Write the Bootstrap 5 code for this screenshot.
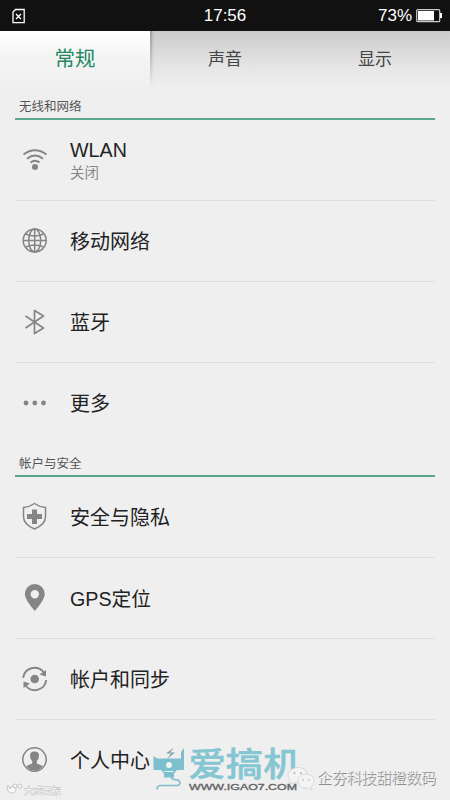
<!DOCTYPE html>
<html lang="zh-CN">
<head>
<meta charset="utf-8">
<meta name="viewport" content="width=device-width, initial-scale=1">
<title>设置</title>
<link href="https://cdn.jsdelivr.net/npm/bootstrap@5.3.0/dist/css/bootstrap.min.css" rel="stylesheet">
<style>
body{font-family:"Liberation Sans","Noto Sans CJK SC",sans-serif;background:#efefef;color:#222}
.screen{width:450px;height:800px;background:#efeff0}
.status{height:31px;background:#111;color:#fff;font-size:17px;line-height:31px}
.status svg,.entry svg{display:block;flex:none}
.status .battery{margin-right:7px}
.tabs{height:58px;background:linear-gradient(#cbcbcb,#d8d8d8 30%,#e8e8e8 70%,#efeff0)}
.tab{flex:1;font-size:17px;line-height:57px;color:#444}
.tab.current{font-size:20.5px;line-height:56px;color:#22885f;background:linear-gradient(#fff,#f5f5f5 40%,#efeff0)}
.tab.after{background:linear-gradient(#8889,#8880) 0 0/2px 100% no-repeat,linear-gradient(#8883,#8880) 2px 0/2px 100% no-repeat}
.group-title{height:31px;margin:0 15px;padding:8px 4px 0;border-bottom:2px solid #57a78a;font-size:12.5px;line-height:20px;color:#555}
#account{height:33px;padding-top:10px}
.entry{height:81px;margin:0 15px;padding-left:5px;border-bottom:1px solid #dfdfdf;font-size:20px;line-height:26px;color:#222}
.entry.last-in{border-color:transparent}
.entry .glyph{width:30px;margin-right:20px}
.entry .label{padding-top:2px}
.entry .latin{font-size:19.700px}
.entry .sub{font-size:14.5px;line-height:20px;color:#888}
.g{color:#858585}
.mark-layer{left:0;top:740px;width:450px;height:60px;pointer-events:none}
</style>
<script src="https://cdn.jsdelivr.net/npm/bootstrap@5.3.0/dist/js/bootstrap.bundle.min.js"></script>
</head>
<body>
<main class="screen position-relative overflow-hidden">
<header class="status d-flex align-items-center position-relative">
<svg class="ms-2" width="20" height="20" viewBox="0 0 20 20" fill="none" stroke="#fff" stroke-width="1.300"><path d="M7.500 3.500h8.700v13.200H5V6zM8 8l5 5M13 8l-5 5"/></svg>
<span class="position-absolute start-50 translate-middle-x">17:56</span>
<span class="ms-auto">73%</span>
<svg class="battery ms-1" width="27" height="15" viewBox="0 0 27 15"><rect x=".7" y="1.700" width="23" height="12" rx="1" fill="none" stroke="#ccc" stroke-width="1.200"/><path fill="#fff" d="M2 3h16v9.500H2zM24 5h2v5h-2z"/></svg>
</header>
<nav class="tabs d-flex text-center">
<div class="tab current">常规</div><div class="tab after">声音</div><div class="tab">显示</div>
</nav>
<h2 class="group-title fw-normal mb-0">无线和网络</h2>
<div class="entry d-flex align-items-center">
<span class="glyph g"><svg width="30" height="30" viewBox="0 0 30 30" fill="none" stroke="currentColor" stroke-width="1.900"><path d="M3.500 9.500q11.500-8.500 23 0M7 13.700q8-6.500 16 0M10.500 17.500q4.500-3.500 9 0"/><circle cx="15" cy="22" r="3" fill="currentColor" stroke="none"/></svg></span>
<div><div class="latin">WLAN</div><div class="sub">关闭</div></div>
</div>
<div class="entry d-flex align-items-center">
<span class="glyph g"><svg width="30" height="30" viewBox="0 0 30 30" fill="none" stroke="currentColor" stroke-width="1.500"><circle cx="14.700" cy="14.500" r="11.500"/><ellipse cx="14.700" cy="14.500" rx="6" ry="11.500"/><path d="M14.700 3v23M3.200 14.500h23M5.700 8q9 4 18 0M5.700 21q9-4 18 0"/></svg></span>
<div class="label">移动网络</div>
</div>
<div class="entry d-flex align-items-center">
<span class="glyph g"><svg width="30" height="30" viewBox="0 0 30 30" fill="none" stroke="currentColor" stroke-width="1.700" stroke-linejoin="round"><path d="M5.500 9l18 12-9 5.500v-23L23.500 9l-18 12"/></svg></span>
<div class="label">蓝牙</div>
</div>
<div class="entry last-in d-flex align-items-center">
<span class="glyph g"><svg width="30" height="30" viewBox="0 0 30 30" fill="currentColor"><circle cx="6" cy="15" r="2.400"/><circle cx="14.800" cy="15" r="2.400"/><circle cx="23.500" cy="15" r="2.400"/></svg></span>
<div class="label">更多</div>
</div>
<h2 class="group-title fw-normal mb-0" id="account">帐户与安全</h2>
<div class="entry d-flex align-items-center">
<span class="glyph g"><svg width="30" height="30" viewBox="0 0 30 30"><path d="M14.500 1.500q5 3.500 11 4v9q0 8-11 12.500-11-4.500-11-12.500v-9q6-.5 11-4z" fill="none" stroke="currentColor" stroke-width="1.500"/><path fill="currentColor" d="M12 7.500h5v4.500h5v5h-5v5h-5v-5H7v-5h5z"/></svg></span>
<div class="label">安全与隐私</div>
</div>
<div class="entry d-flex align-items-center">
<span class="glyph g"><svg width="30" height="30" viewBox="0 0 30 30"><path fill="currentColor" fill-rule="evenodd" d="M14.800 28Q4.800 16.500 4.800 11a10 10 0 0 1 20 0Q24.800 16.500 14.800 28zM14.800 7a4.200 4.200 0 1 0 0 8.400 4.200 4.200 0 0 0 0-8.400z"/></svg></span>
<div class="label latin">GPS定位</div>
</div>
<div class="entry d-flex align-items-center">
<span class="glyph g"><svg width="30" height="30" viewBox="0 0 30 30"><circle cx="14.700" cy="15" r="4.300" fill="currentColor"/><path d="M3.200 14A11.500 11.500 0 0 1 23.500 8M26.200 16A11.500 11.500 0 0 1 6 22" fill="none" stroke="currentColor" stroke-width="1.900"/><path fill="currentColor" d="M26 6v6.500l-6.500-2zM3.500 24v-6.500l6.500 2z"/></svg></span>
<div class="label">帐户和同步</div>
</div>
<div class="entry last-in d-flex align-items-center">
<span class="glyph g"><svg width="30" height="30" viewBox="0 0 30 30"><circle cx="14.500" cy="14.500" r="11.700" fill="none" stroke="currentColor" stroke-width="1.500"/><path fill="currentColor" d="M10 10.500q0-4 4.500-4t4.500 4q0 4-2.200 5.500v2.500l6 2.500q-3 4.500-8.300 4.500t-8.300-4.500l6-2.500V16Q10 14.500 10 10.500z"/></svg></span>
<div class="label">个人中心</div>
</div>
<svg class="mark-layer position-absolute" viewBox="0 740 450 60">
<path fill="#7cc0cd" d="M153.500 756l4 2.500h23.500V752l3-4v22h-7l-3 3.500v4h-10v-4l-3-3.500h-7.500z"/>
<path d="M174 747.500l-8 6h5l-4.500 6 8.500-7h-5z" fill="#7b9faa"/>
<circle cx="169" cy="765" r="3" fill="#edf6f7"/><path d="M164.500 771.500h9" stroke="#edf6f7"/><path d="M171 777q1 3 7 3 4 3 0 5.500h-17q-4 0-4 4" fill="none" stroke="#80bdca" stroke-width="1.700"/>
<text x="188.500" y="776" font-family="Noto Sans CJK SC,sans-serif" font-weight="500" font-size="33" textLength="112" lengthAdjust="spacingAndGlyphs" fill="#84c6d1" stroke="#84c6d1" stroke-width=".5">爱搞机</text>
<text x="189" y="789.500" font-family="Liberation Sans,sans-serif" font-size="9.500" textLength="108" lengthAdjust="spacingAndGlyphs" fill="#666" stroke="#666" stroke-width=".4">WWW.IGAO7.COM</text>
<g fill="#f4f4f4" stroke="#c9c9c9" stroke-width=".6"><path d="M290 780q-5-7 2-11 8-4 14 2 4 8-5 11h-5l-6 2z"/><path d="M298 782q-1-7 7-8 8 0 9 7 0 4-3 6l1 3-4-2q-9 1-10-6z"/></g>
<g fill="#aaa"><circle cx="294.500" cy="773" r=".9"/><circle cx="301" cy="773" r=".9"/><circle cx="303" cy="780" r=".8"/><circle cx="309" cy="780" r=".8"/></g>
<g font-family="Noto Sans CJK SC,sans-serif"><text x="317.800" y="783.800" font-size="15" textLength="119" fill="#8e8e8e">企夯科技甜橙数码</text><text x="317" y="783" font-size="15" textLength="119" fill="#f2f2f2" fill-opacity=".65">企夯科技甜橙数码</text>
<text x="24" y="793.500" font-size="9.500" textLength="37" fill="#f8f8f8" stroke="#bbb" stroke-width=".8" paint-order="stroke">大成云报</text></g>
<g fill="#f8f8f8" stroke="#bbb" stroke-width=".8"><path d="M7 786q0 7 5 7 4 0 4-5l-4-2-2 3-1-3z"/><circle cx="15" cy="786" r="2"/><circle cx="20" cy="786" r="2"/></g>
</svg>
</main>
</body>
</html>
